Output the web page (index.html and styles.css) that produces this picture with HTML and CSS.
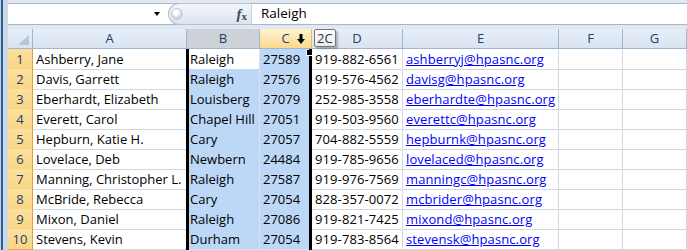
FILE: index.html
```html
<!DOCTYPE html>
<html lang="en">
  <head>
    <meta charset="UTF-8" />
    <title>Book1</title>
    <link rel="stylesheet" href="styles.css">
  </head>

  <body>
    <div class="window">
      <div class="frame"></div>
      <div class="main">
        <div class="formula">
          <div class="fbar">
            <div class="namebox"><span class="drop"></span></div>
            <div class="grip">
              <span class="knob"></span>
              <span class="fx"><i>f</i><sub>x</sub></span>
            </div>
            <div class="input">Raleigh</div>
          </div>
        </div>

        <div class="sheet">
          <div class="row hdr">
            <div class="corner"><span class="tri"></span></div>
            <div class="ch">A</div>
            <div class="ch ch-b">B</div>
            <div class="ch ch-c">C
              <svg class="arrow" width="8" height="10" viewBox="0 0 8 10">
                <path d="M2.5 0h3v5h2.5l-4 5l-4-5h2.5z" fill="#000" />
              </svg>
            </div>
            <div class="ch">D</div>
            <div class="ch">E</div>
            <div class="ch">F</div>
            <div class="ch">G</div>
          </div>

          <div class="row"><div class="rh">1</div><div class="c">Ashberry, Jane</div><div class="c sel active">Raleigh</div><div class="c sel">27589</div><div class="c num">919-882-6561</div><div class="c mail"><a href="">ashberryj@hpasnc.org</a></div><div class="c"></div><div class="c"></div></div>
          <div class="row"><div class="rh">2</div><div class="c">Davis, Garrett</div><div class="c sel">Raleigh</div><div class="c sel">27576</div><div class="c num">919-576-4562</div><div class="c mail"><a href="">davisg@hpasnc.org</a></div><div class="c"></div><div class="c"></div></div>
          <div class="row"><div class="rh">3</div><div class="c">Eberhardt, Elizabeth</div><div class="c sel">Louisberg</div><div class="c sel">27079</div><div class="c num">252-985-3558</div><div class="c mail"><a href="">eberhardte@hpasnc.org</a></div><div class="c"></div><div class="c"></div></div>
          <div class="row"><div class="rh">4</div><div class="c">Everett, Carol</div><div class="c sel">Chapel Hill</div><div class="c sel">27051</div><div class="c num">919-503-9560</div><div class="c mail"><a href="">everettc@hpasnc.org</a></div><div class="c"></div><div class="c"></div></div>
          <div class="row"><div class="rh">5</div><div class="c">Hepburn, Katie H.</div><div class="c sel">Cary</div><div class="c sel">27057</div><div class="c num">704-882-5559</div><div class="c mail"><a href="">hepburnk@hpasnc.org</a></div><div class="c"></div><div class="c"></div></div>
          <div class="row"><div class="rh">6</div><div class="c">Lovelace, Deb</div><div class="c sel">Newbern</div><div class="c sel">24484</div><div class="c num">919-785-9656</div><div class="c mail"><a href="">lovelaced@hpasnc.org</a></div><div class="c"></div><div class="c"></div></div>
          <div class="row"><div class="rh">7</div><div class="c">Manning, Christopher L.</div><div class="c sel">Raleigh</div><div class="c sel">27587</div><div class="c num">919-976-7569</div><div class="c mail"><a href="">manningc@hpasnc.org</a></div><div class="c"></div><div class="c"></div></div>
          <div class="row"><div class="rh">8</div><div class="c">McBride, Rebecca</div><div class="c sel">Cary</div><div class="c sel">27054</div><div class="c num">828-357-0072</div><div class="c mail"><a href="">mcbrider@hpasnc.org</a></div><div class="c"></div><div class="c"></div></div>
          <div class="row"><div class="rh">9</div><div class="c">Mixon, Daniel</div><div class="c sel">Raleigh</div><div class="c sel">27086</div><div class="c num">919-821-7425</div><div class="c mail"><a href="">mixond@hpasnc.org</a></div><div class="c"></div><div class="c"></div></div>
          <div class="row"><div class="rh">10</div><div class="c">Stevens, Kevin</div><div class="c sel">Durham</div><div class="c sel">27054</div><div class="c num">919-783-8564</div><div class="c mail"><a href="">stevensk@hpasnc.org</a></div><div class="c"></div><div class="c"></div></div>

          <!-- selection outline + drag tooltip sit over the cells -->
          <div class="selbox"><span class="handle"></span></div>
          <div class="tip">2C</div>
        </div>
      </div>
    </div>
  </body>
</html>
```

FILE: styles.css
```css
body {
  margin: 0;
  width: 687px;
  height: 250px;
  overflow: hidden;
  background: #fff;
  font-family: "Open Sans", "Liberation Sans", sans-serif;
  font-size: 13px;
  color: #000;
}

.window {
  display: flex;
  height: 250px;
}

.frame {
  width: 8px;
  flex: none;
  background: linear-gradient(to right, #c3d3e7 0 1px, #2d5b93 1px 3px, #cbd8e8 3px 8px);
}

.main {
  flex: 1;
  min-width: 0;
  display: flex;
  flex-direction: column;
}

/* formula bar */
.formula {
  height: 29px;
  box-sizing: border-box;
  padding-top: 3px;
  background: #e1e8f1;
}

.fbar {
  height: 22px;
  box-sizing: border-box;
  display: flex;
  background: #fff;
  border-top: 1px solid #a7b6c9;
  border-bottom: 1px solid #a7b6c9;
}

.namebox {
  width: 157px;
  display: flex;
  align-items: center;
  justify-content: flex-end;
  padding-right: 5px;
  box-sizing: border-box;
}

.drop {
  border-left: 3.5px solid transparent;
  border-right: 3.5px solid transparent;
  border-top: 4px solid #000;
}

.grip {
  margin-left: 3px;
  width: 84px;
  box-sizing: border-box;
  display: flex;
  align-items: center;
  justify-content: space-between;
  padding: 0 4px 0 2px;
  border: 1px solid #b3c0d0;
  border-right-color: #c9d3df;
  border-radius: 11px 0 0 11px;
  margin-top: -1px;
  margin-bottom: -1px;
  background: linear-gradient(#f3f6fa, #dce4ee);
}

.knob {
  width: 12px;
  height: 12px;
  border-radius: 50%;
  background: radial-gradient(circle at 40% 35%, #fff 0 2px, #c5cfdb 6px);
  border: 1px solid #c3ccd8;
  box-sizing: border-box;
}

.fx {
  font-family: "Liberation Serif", serif;
  font-weight: bold;
  font-size: 15px;
  color: #3e4c61;
  line-height: 1;
}

.fx sub {
  font-size: 11px;
  vertical-align: -1px;
}

.input {
  flex: 1;
  padding-left: 9px;
  line-height: 19px;
  font-size: 13.5px;
}

/* grid */
.sheet {
  position: relative;
  flex: 1;
}

.row {
  display: grid;
  grid-template-columns: 25px 154px 73px 52px 91px 156px 64px 64px;
  height: 20px;
}

.c {
  border-right: 1px solid #d0d7e5;
  border-bottom: 1px solid #d0d7e5;
  padding: 1px 3px 0;
  line-height: 18px;
  white-space: nowrap;
  overflow: hidden;
}

.num {
  letter-spacing: 0.1px;
}

.mail {
  letter-spacing: 0.1px;
}

.c a {
  color: #0000ff;
}

.sel {
  background: #bdd7f6;
  border-color: #d8e4f3;
}

.active {
  background: #fff;
}

.rh {
  background: linear-gradient(#fbe09e, #f8d584);
  border-right: 1px solid #e0a240;
  border-bottom: 1px solid #d9a95c;
  text-align: center;
  line-height: 19px;
  padding-top: 1px;
  color: #23406c;
}

.hdr .ch,
.corner {
  background: linear-gradient(#e6eef8, #dae4f0);
  border-right: 1px solid #9eb6ce;
  border-bottom: 1px solid #9eb6ce;
  text-align: center;
  line-height: 19px;
  color: #23406c;
  position: relative;
}

.hdr .ch-b {
  background: #cdd2d9;
}

.hdr .ch-c {
  background: linear-gradient(#fef3cf, #fad98d);
  border-right-color: #e8b75e;
}

.arrow {
  position: absolute;
  right: 6px;
  top: 5px;
}

.corner .tri {
  position: absolute;
  right: 3px;
  bottom: 3px;
  width: 0;
  height: 0;
  border-left: 11px solid transparent;
  border-bottom: 10px solid #b6c5d7;
}

.selbox {
  position: absolute;
  left: 178px;
  top: 20px;
  width: 126px;
  bottom: -4px;
  box-sizing: border-box;
  border-left: 3px solid #000;
  border-right: 3px solid #000;
}

.handle {
  position: absolute;
  right: -4px;
  top: 1px;
  width: 5px;
  height: 5px;
  background: #000;
  border: 1px solid #fff;
  border-top: 0;
}

.tip {
  position: absolute;
  left: 306px;
  top: 0;
  height: 16px;
  padding: 0 2px;
  line-height: 16px;
  font-size: 13px;
  color: #333;
  background: linear-gradient(#fff, #e6e9ee);
  border: 1px solid #777;
  border-radius: 2px;
  box-shadow: 2px 2px 2px rgba(0, 0, 0, 0.25);
}
```
